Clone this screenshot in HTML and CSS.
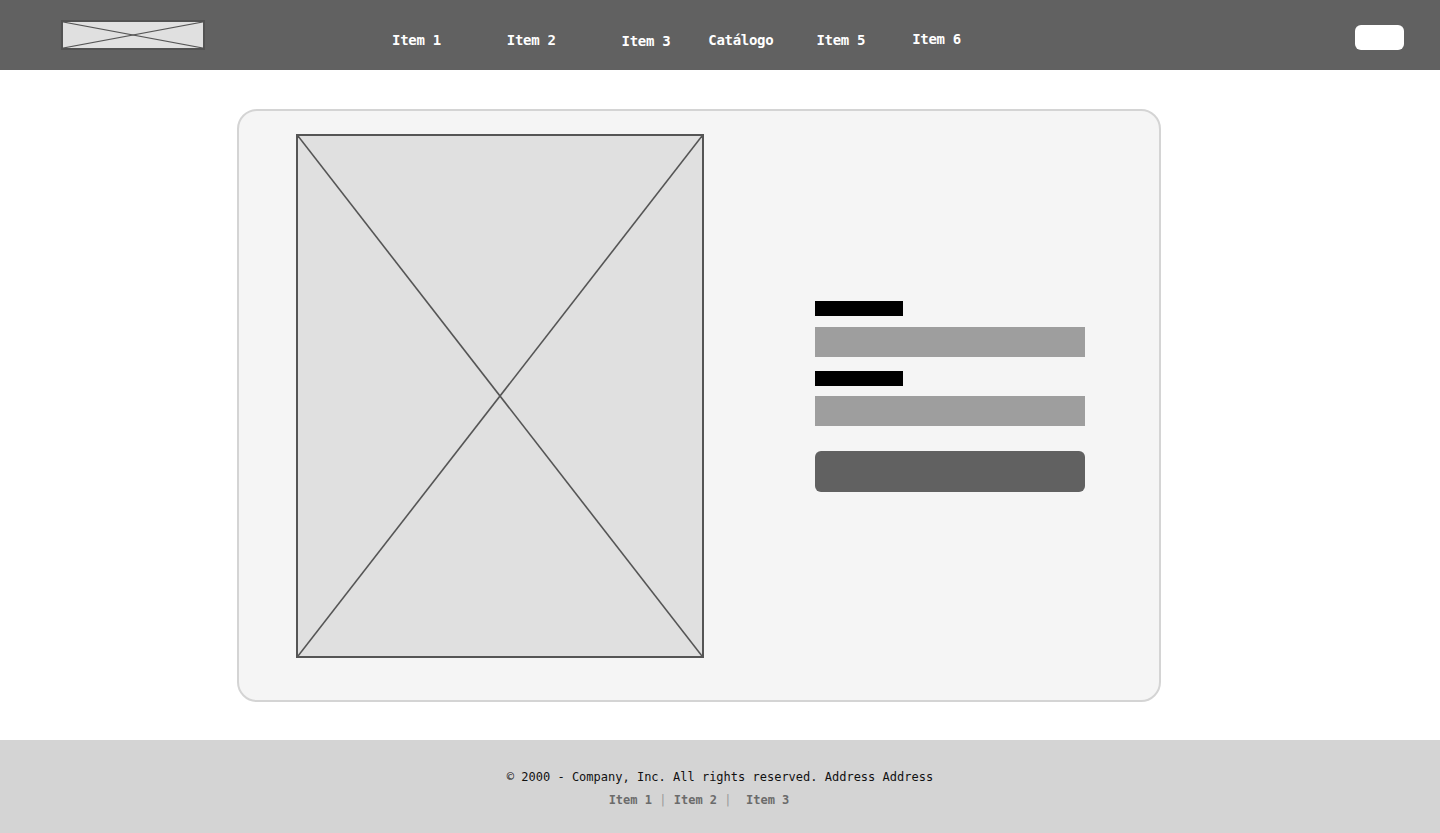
FILE: index.html
```html
<!DOCTYPE html>
<html lang="es">
<head>
    <meta charset="UTF-8">
    <meta name="viewport" content="width=device-width, initial-scale=1.0">
    <title>Catálogo</title>
    <link rel="stylesheet" href="styles.css">
</head>
<body>
    <header class="topbar">
        <div class="logo">
            <svg viewBox="0 0 100 100" preserveAspectRatio="none">
                <line x1="0" y1="0" x2="100" y2="100"/>
                <line x1="0" y1="100" x2="100" y2="0"/>
            </svg>
        </div>
        <nav class="nav">
            <a href="#" class="nav-1">Item 1</a>
            <a href="#" class="nav-2">Item 2</a>
            <a href="#" class="nav-3">Item 3</a>
            <a href="#" class="nav-4">Catálogo</a>
            <a href="#" class="nav-5">Item 5</a>
            <a href="#" class="nav-6">Item 6</a>
        </nav>
        <button class="top-btn"></button>
    </header>

    <main class="main">
        <section class="card">
            <div class="picture">
                <svg viewBox="0 0 100 100" preserveAspectRatio="none">
                    <line x1="0" y1="0" x2="100" y2="100"/>
                    <line x1="0" y1="100" x2="100" y2="0"/>
                </svg>
            </div>
            <form class="form">
                <span class="label"></span>
                <span class="field"></span>
                <span class="label second"></span>
                <span class="field"></span>
                <button type="button" class="submit"></button>
            </form>
        </section>
    </main>

    <footer class="footer">
        <p class="copy">&copy; 2000 - Company, Inc. All rights reserved. Address Address</p>
        <p class="links"><a href="#">Item 1</a> <span class="sep">|</span> <a href="#">Item 2</a> <span class="sep">|</span> &nbsp;<a href="#">Item 3</a></p>
    </footer>
</body>
</html>
```

FILE: styles.css
```css
* {
    margin: 0;
    padding: 0;
    box-sizing: border-box;
}

body {
    font-family: 'DejaVu Sans Mono', 'Liberation Mono', monospace;
    background-color: #fff;
    color: #111;
}

/* Top bar */
.topbar {
    height: 70px;
    background-color: #616161;
    display: flex;
    align-items: center;
    padding: 0 36px 0 61px;
}

.logo {
    width: 144px;
    height: 30px;
    background-color: #e0e0e0;
    border: 2px solid #525252;
}

.logo svg,
.picture svg {
    display: block;
    width: 100%;
    height: 100%;
}

.logo line {
    stroke: #555;
    stroke-width: 1.2;
    vector-effect: non-scaling-stroke;
}

.nav {
    display: flex;
    align-items: center;
    margin-left: 187px;
    margin-top: 10px;
}

.nav a {
    color: #fff;
    text-decoration: none;
    font-weight: bold;
    font-size: 14px;
    letter-spacing: -0.3px;
}

.nav-2 { margin-left: 66px; }
.nav-3 { margin-left: 66px; margin-top: 2px; }
.nav-4 { margin-left: 38px; }
.nav-5 { margin-left: 43px; }
.nav-6 { margin-left: 47px; margin-top: -2px; }

.top-btn {
    margin-left: auto;
    width: 49px;
    height: 25px;
    margin-top: 4px;
    background-color: #fff;
    border: none;
    border-radius: 6px;
}

/* Content */
.main {
    padding: 39px 0 38px 237px;
}

.card {
    width: 924px;
    height: 593px;
    background-color: #f5f5f5;
    border: 2px solid #d4d4d4;
    border-radius: 20px;
    display: flex;
    align-items: flex-start;
    padding: 23px 0 0 57px;
}

.picture {
    width: 408px;
    height: 524px;
    background-color: #e0e0e0;
    border: 2px solid #555;
}

.picture line {
    stroke: #555;
    stroke-width: 1.6;
    vector-effect: non-scaling-stroke;
}

.form {
    display: flex;
    flex-direction: column;
    width: 270px;
    margin: 167px 0 0 111px;
}

.label {
    display: block;
    width: 88px;
    height: 15px;
    background-color: #000;
}

.field {
    display: block;
    height: 30px;
    margin: 11px 0 14px;
    background-color: #9e9e9e;
}

.second + .field {
    margin-top: 10px;
}

.submit {
    height: 41px;
    margin-top: 11px;
    border: none;
    border-radius: 6px;
    background-color: #616161;
}

/* Footer */
.footer {
    background-color: #d4d4d4;
    height: 93px;
    text-align: center;
    padding-top: 30px;
    font-size: 12px;
}

.copy {
    color: #111;
}

.links {
    margin-top: 9px;
    padding-right: 42px;
    color: #6b6b6b;
    font-weight: bold;
}

.links a {
    color: #6b6b6b;
    text-decoration: none;
}

.links .sep {
    color: #999;
    font-weight: normal;
}
```
